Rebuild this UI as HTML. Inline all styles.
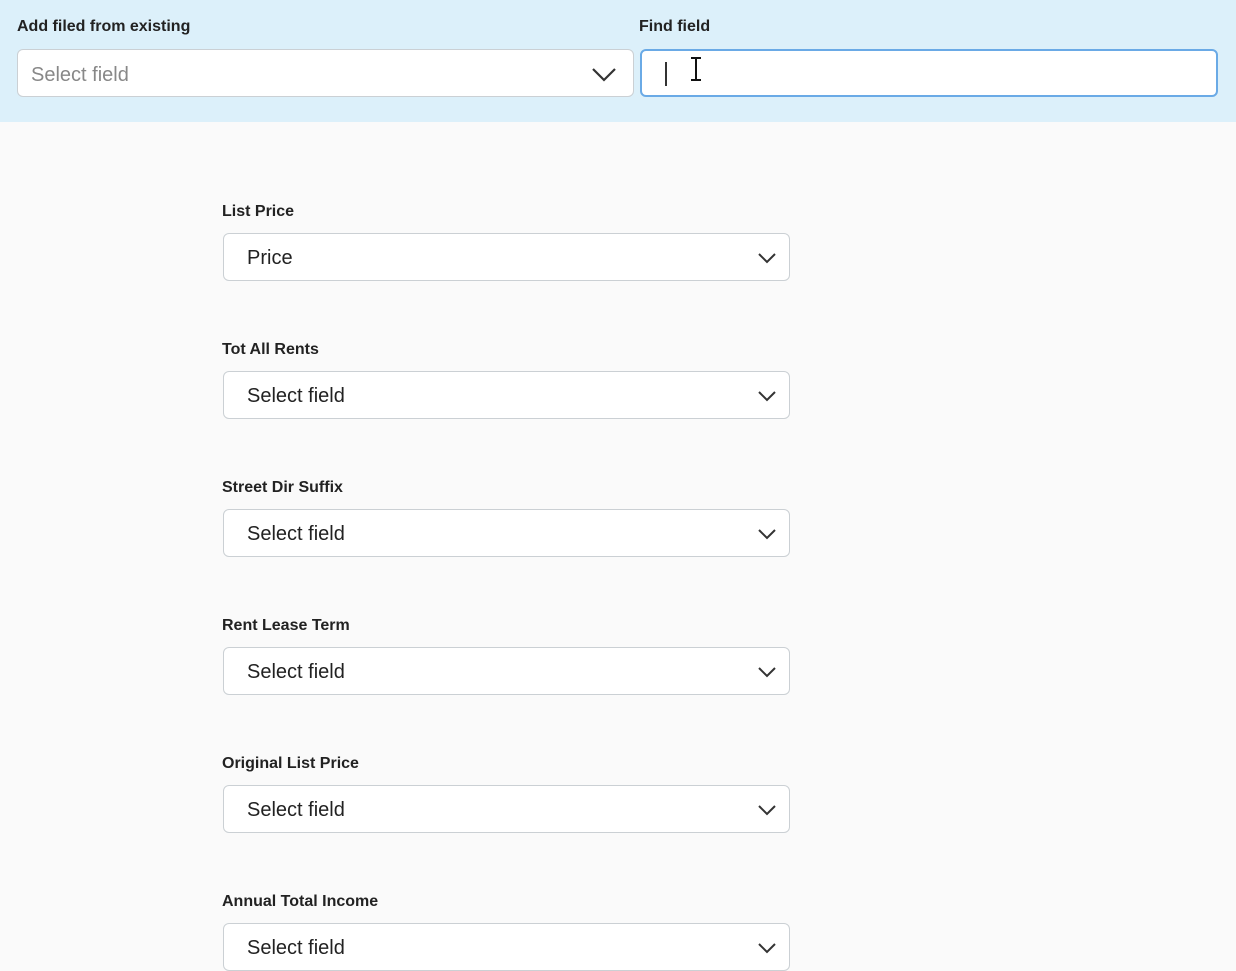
<!DOCTYPE html>
<html><head><meta charset="utf-8"><style>
*{box-sizing:border-box;margin:0;padding:0}
body{width:1236px;height:942px;overflow:hidden;background:#fafafa;font-family:"Liberation Sans",sans-serif;position:relative}
.hdr{position:absolute;left:0;top:0;width:1236px;height:122px;background:#dcf0fa}
.lbl{position:absolute;font-size:16px;font-weight:bold;color:#222}
.box{position:absolute;background:#fff;border:1px solid #cbd0d4;border-radius:6px;font-size:20px;color:#222}
.box span{position:absolute;left:23px;top:13px}
.chev{position:absolute;right:12px;top:17px}
</style></head><body>
<div class="hdr">
<div class="lbl" style="left:17px;top:18px">Add filed from existing</div>
<div class="lbl" style="left:639px;top:18px">Find field</div>
<div class="box" style="left:17px;top:49px;width:617px;height:48px"><span style="left:13px;top:14px;color:#888">Select field</span>
<svg class="chev" style="right:16px;top:15px" width="26" height="18" viewBox="0 0 26 18"><path d="M2 4 L13 15 L24 4" fill="none" stroke="#333" stroke-width="2.2"/></svg></div>
<div class="box" style="left:640px;top:49px;width:578px;height:48px;border:2px solid #6aaae6"><div style="position:absolute;left:23px;top:11px;width:2px;height:24px;background:#333"></div>
<div style="position:absolute;left:53px;top:7px;width:2px;height:22px;background:#111"></div>
<div style="position:absolute;left:49px;top:6px;width:10px;height:2px;background:#111"></div>
<div style="position:absolute;left:49px;top:28px;width:10px;height:2px;background:#111"></div></div>
</div>
<div id="f"></div>
<script>
var items=[["List Price","Price"],["Tot All Rents","Select field"],["Street Dir Suffix","Select field"],["Rent Lease Term","Select field"],["Original List Price","Select field"],["Annual Total Income","Select field"]];
var h="";items.forEach(function(it,i){var y=i*138;
h+='<div class="lbl" style="left:222px;top:'+(203+y)+'px">'+it[0]+'</div>';
h+='<div class="box" style="left:223px;top:'+(233+y)+'px;width:567px;height:48px"><span>'+it[1]+'</span><svg class="chev" width="20" height="14" viewBox="0 0 20 14"><path d="M2 3 L10 11 L18 3" fill="none" stroke="#333" stroke-width="2"/></svg></div>';});
document.getElementById("f").innerHTML=h;
</script>
</body></html>
